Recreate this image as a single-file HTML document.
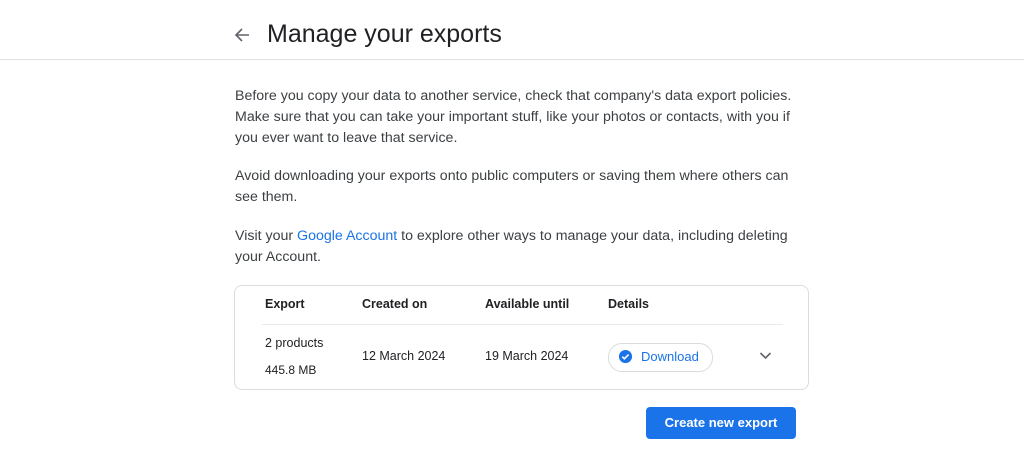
<!DOCTYPE html>
<html><head><style>
body{margin:0;width:1024px;height:474px;background:#fff;font-family:"Liberation Sans",Arial,sans-serif;color:#3c4043;position:relative;overflow:hidden}
.hdr{position:absolute;left:0;top:0;width:1024px;height:59px;border-bottom:1px solid #e0e0e0}
.title{position:absolute;left:267px;top:20px;font-size:25px;color:#202124}
.p{position:absolute;left:235px;font-size:14.2px;line-height:21px;color:#3c4043;width:570px}
a{color:#1a73e8;text-decoration:none}
.card{position:absolute;left:234px;top:285px;width:573px;height:103px;border:1px solid #dadce0;border-radius:8px}
.t{position:absolute;font-size:12.5px;color:#202124}
.h{font-weight:bold}
.btn{position:absolute;left:646px;top:407px;width:150px;height:32px;background:#1a73e8;border-radius:4px;color:#fff;font-weight:bold;font-size:13px;text-align:center;line-height:32px}
.dl{position:absolute;left:608px;top:343px;width:103px;height:27px;border:1px solid #dadce0;border-radius:14px}
</style></head><body>
<div class="hdr"></div>
<svg style="position:absolute;left:234px;top:27px" width="16" height="16" viewBox="0 0 16 16"><path d="M15 8H2M8 2L2 8l6 6" stroke="#5f6368" stroke-width="1.6" fill="none"/></svg>
<div class="title">Manage your exports</div>
<div class="p" style="top:86px">Before you copy your data to another service, check that company's data export policies. Make sure that you can take your important stuff, like your photos or contacts, with you if you ever want to leave that service.</div>
<div class="p" style="top:166px">Avoid downloading your exports onto public computers or saving them where others can see them.</div>
<div class="p" style="top:226px">Visit your <a>Google Account</a> to explore other ways to manage your data, including deleting your Account.</div>
<div class="card"></div>
<div style="position:absolute;left:262px;top:324px;width:521px;height:1px;background:#e8eaed"></div>
<div class="t h" style="left:265px;top:297px">Export</div>
<div class="t h" style="left:362px;top:297px">Created on</div>
<div class="t h" style="left:485px;top:297px">Available until</div>
<div class="t h" style="left:608px;top:297px">Details</div>
<div class="t" style="left:265px;top:336px">2 products</div>
<div class="t" style="left:265px;top:363px;font-size:12px">445.8 MB</div>
<div class="t" style="left:362px;top:349px">12 March 2024</div>
<div class="t" style="left:485px;top:349px">19 March 2024</div>
<div class="dl"></div>
<svg style="position:absolute;left:618px;top:349px" width="15" height="15" viewBox="0 0 16 16"><circle cx="8" cy="8" r="7" fill="#1a73e8"/><path d="M4.5 8.2l2.3 2.2 4.5-4.5" stroke="#fff" stroke-width="1.7" fill="none"/></svg>
<div class="t" style="left:641px;top:349px;color:#1a73e8;font-size:13px">Download</div>
<svg style="position:absolute;left:759px;top:351px" width="13" height="9" viewBox="0 0 13 9"><path d="M1.5 2l5 5 5-5" stroke="#5f6368" stroke-width="1.6" fill="none"/></svg>
<div class="btn">Create new export</div>
</body></html>
